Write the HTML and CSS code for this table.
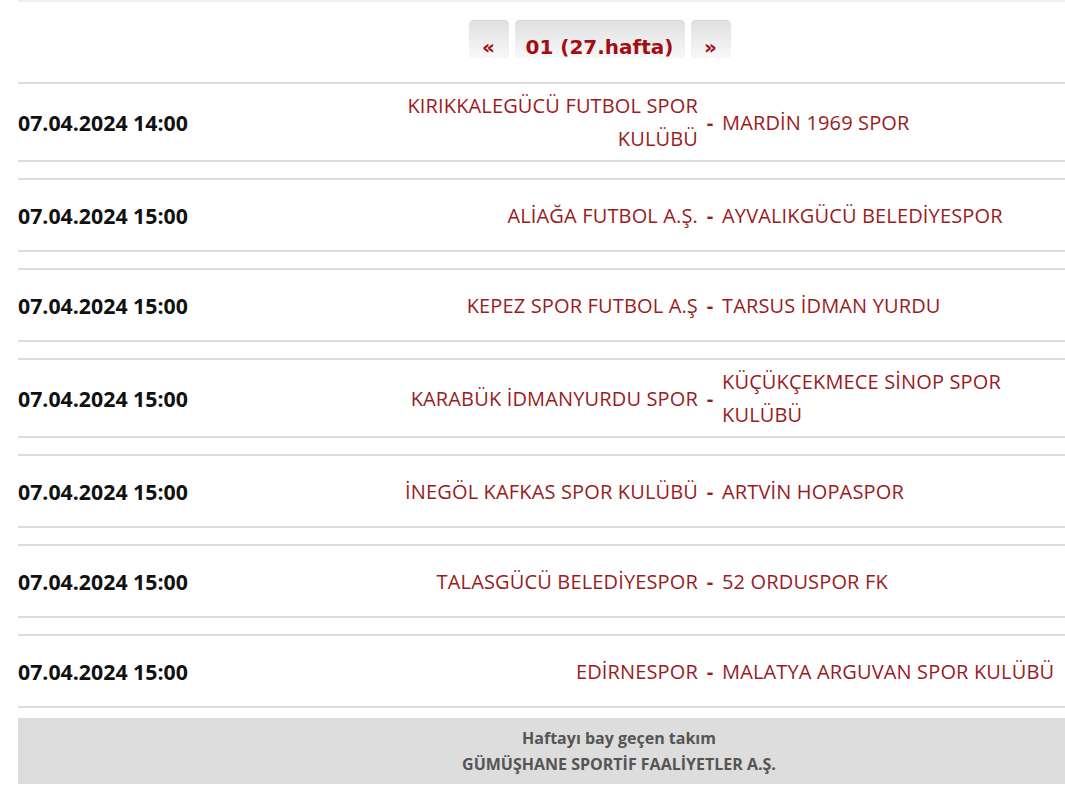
FILE: index.html
```html
<!DOCTYPE html>
<html lang="tr">
<head>
<meta charset="utf-8">
<link rel="stylesheet" href="styles.css">
</head>
<body>
<div class="frame">
<div class="page">
  <div class="topline"></div>
  <div class="pager">
    <a class="pbtn pbtn-arrow">«</a>
    <a class="pbtn pbtn-week">01 (27.hafta)</a>
    <a class="pbtn pbtn-arrow">»</a>
  </div>
  <div class="matches">
    <div class="match">
      <div class="date">07.04.2024 14:00</div>
      <div class="home">KIRIKKALEGÜCÜ FUTBOL SPOR KULÜBÜ</div>
      <div class="dash">-</div>
      <div class="away">MARDİN 1969 SPOR</div>
    </div>
    <div class="match">
      <div class="date">07.04.2024 15:00</div>
      <div class="home">ALİAĞA FUTBOL A.Ş.</div>
      <div class="dash">-</div>
      <div class="away">AYVALIKGÜCÜ BELEDİYESPOR</div>
    </div>
    <div class="match">
      <div class="date">07.04.2024 15:00</div>
      <div class="home">KEPEZ SPOR FUTBOL A.Ş</div>
      <div class="dash">-</div>
      <div class="away">TARSUS İDMAN YURDU</div>
    </div>
    <div class="match">
      <div class="date">07.04.2024 15:00</div>
      <div class="home">KARABÜK İDMANYURDU SPOR</div>
      <div class="dash">-</div>
      <div class="away">KÜÇÜKÇEKMECE SİNOP SPOR KULÜBÜ</div>
    </div>
    <div class="match">
      <div class="date">07.04.2024 15:00</div>
      <div class="home">İNEGÖL KAFKAS SPOR KULÜBÜ</div>
      <div class="dash">-</div>
      <div class="away">ARTVİN HOPASPOR</div>
    </div>
    <div class="match">
      <div class="date">07.04.2024 15:00</div>
      <div class="home">TALASGÜCÜ BELEDİYESPOR</div>
      <div class="dash">-</div>
      <div class="away">52 ORDUSPOR FK</div>
    </div>
    <div class="match">
      <div class="date">07.04.2024 15:00</div>
      <div class="home">EDİRNESPOR</div>
      <div class="dash">-</div>
      <div class="away">MALATYA ARGUVAN SPOR KULÜBÜ</div>
    </div>
  </div>
  <div class="bye">
    <div class="bye-label">Haftayı bay geçen takım</div>
    <div class="bye-team">GÜMÜŞHANE SPORTİF FAALİYETLER A.Ş.</div>
  </div>
</div>
</div>
</body>
</html>
```
FILE: styles.css
```css
html, body {
  margin: 0;
  padding: 0;
  background: #fff;
}
.frame {
  margin-left: 18px;
  width: 1047px;
  overflow: hidden;
}
.page {
  width: 1202px;
  font-family: "Open Sans", "DejaVu Sans", sans-serif;
}
.topline {
  height: 2px;
  background: #eee;
}
.pager {
  display: flex;
  justify-content: center;
  gap: 6px;
  padding-top: 18px;
  height: 38px;
  margin-right: 39px;
}
.pbtn {
  display: flex;
  align-items: flex-end;
  justify-content: center;
  height: 38px;
  box-sizing: border-box;
  border-radius: 5px 5px 0 0;
  background: linear-gradient(#e0e0e0, #f8f8f8);
  box-shadow: inset 0 1px 0 #d6d6d6;
  color: #a30d14;
  font-family: "DejaVu Sans", Verdana, sans-serif;
  font-weight: bold;
  font-size: 20px;
  line-height: 22px;
}
.pbtn-arrow {
  width: 40px;
}
.pbtn-week {
  width: 170px;
}
.matches {
  margin-top: 24px;
}
.match {
  display: grid;
  grid-template-columns: 340px 340px 24px 343px 1fr;
  align-items: center;
  min-height: 74px;
  border-top: 2px solid #ddd;
  border-bottom: 2px solid #ddd;
  margin-bottom: 16px;
  padding: 5px 0;
  box-sizing: border-box;
}
.match:last-child {
  margin-bottom: 10px;
}
.date {
  font-weight: bold;
  font-size: 21.3px;
  color: #111;
}
.home, .away, .dash {
  color: #9a1b22;
  font-size: 20px;
  line-height: 33px;
  letter-spacing: 0.15px;
}
.home {
  text-align: right;
}
.dash {
  text-align: center;
  font-weight: bold;
  letter-spacing: 0;
}
.bye {
  background: #dddddd;
  height: 66px;
  display: flex;
  flex-direction: column;
  justify-content: center;
  align-items: center;
  color: #555;
  font-weight: bold;
  font-size: 16px;
  line-height: 26px;
}
```
